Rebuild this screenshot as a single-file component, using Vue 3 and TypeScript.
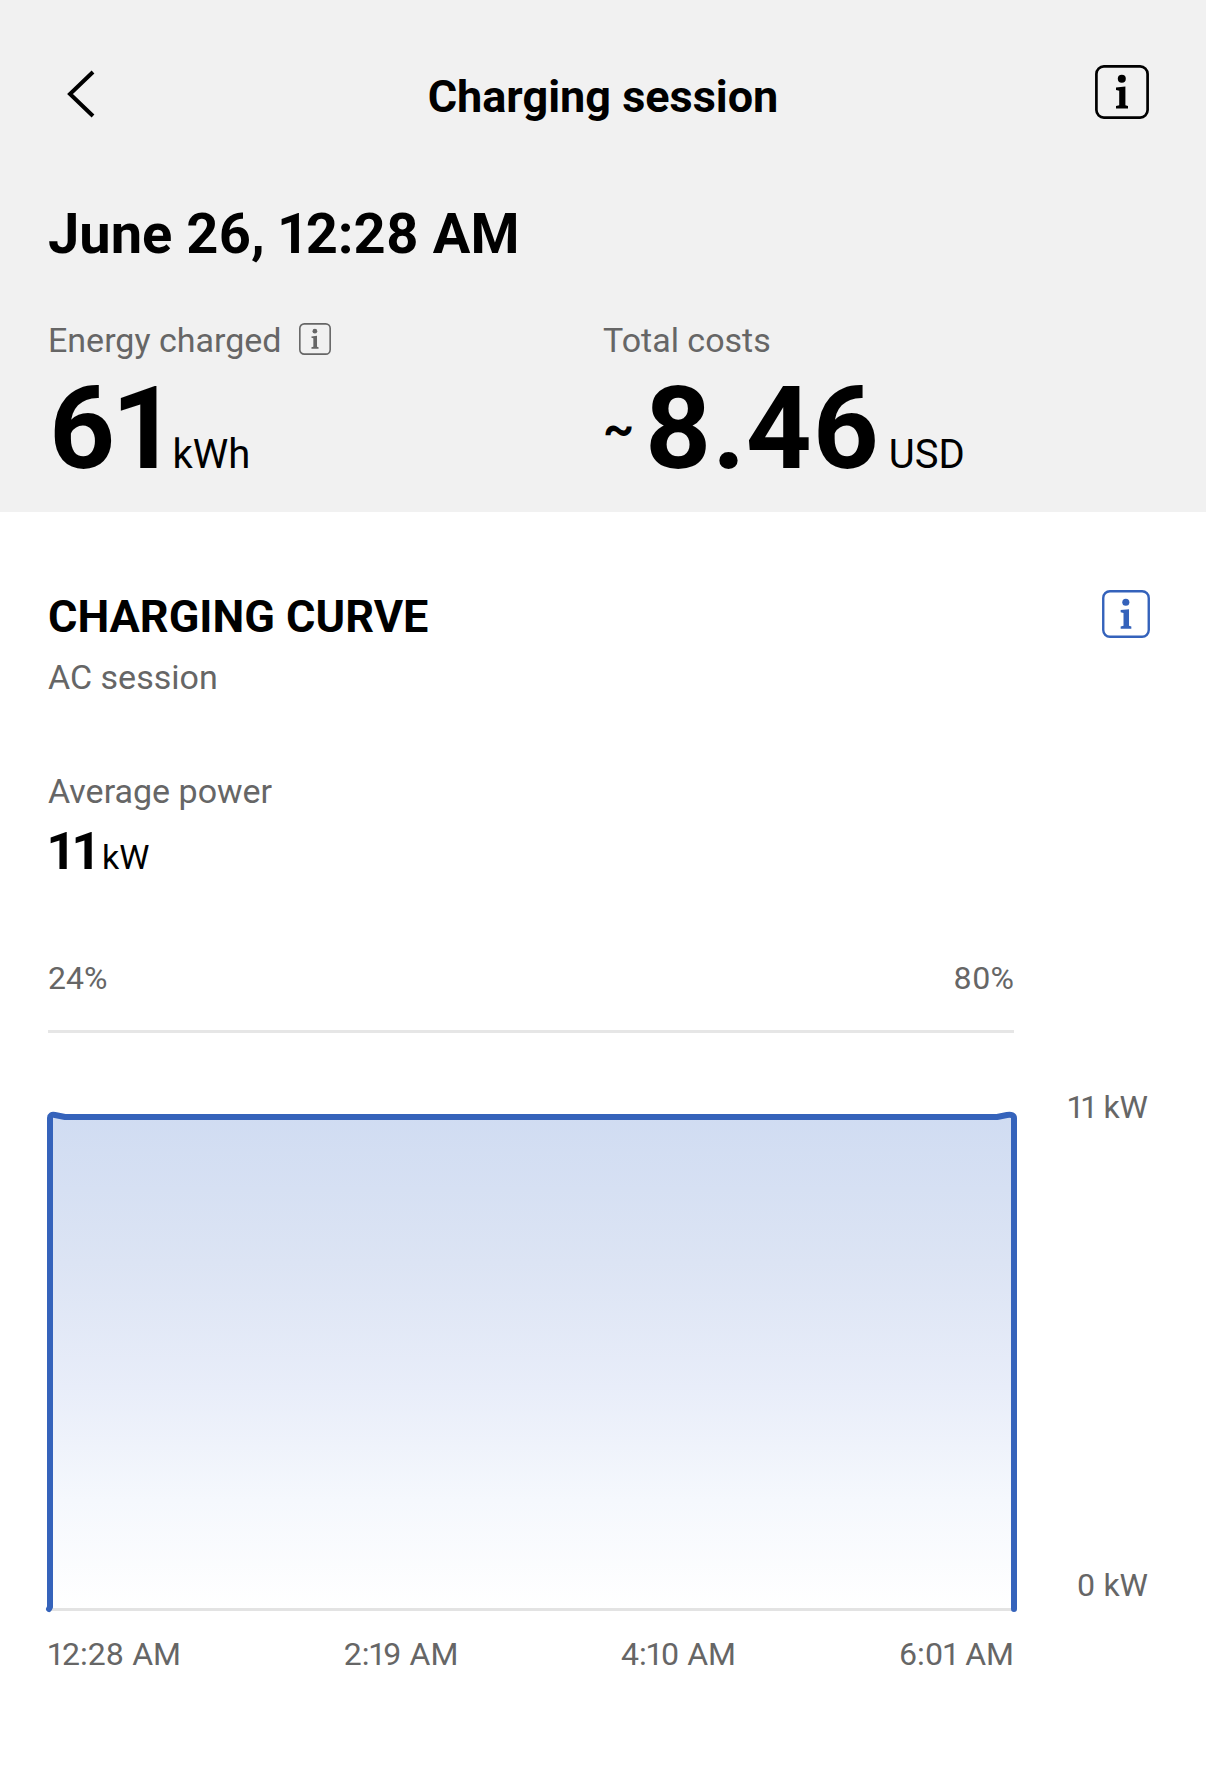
<script setup lang="ts">
import { defineComponent, h } from 'vue'

interface Session {
  startedAt: string
  energy: string
  cost: string
  averagePower: string
  startCharge: string
  endCharge: string
  maxPower: string
  minPower: string
  times: string[]
}

const session: Session = {
  startedAt: 'June 26, 12:28 AM',
  energy: '61',
  cost: '8.46',
  averagePower: '11',
  startCharge: '24%',
  endCharge: '80%',
  maxPower: '11 kW',
  minPower: '0 kW',
  times: ['12:28 AM', '2:19 AM', '4:10 AM', '6:01 AM'],
}

const InfoIcon = defineComponent({
  props: { size: { type: Number, required: true } },
  setup(props) {
    return () =>
      h('svg', { width: props.size, height: props.size, viewBox: '0 0 54 54', 'aria-hidden': 'true' }, [
        h('rect', { x: 1.4, y: 1.4, width: 51.2, height: 51.2, rx: 7.5, fill: 'none', stroke: 'currentColor', 'stroke-width': 2.7 }),
        h('circle', { cx: 26.8, cy: 13.8, r: 4, fill: 'currentColor' }),
        h('path', { d: 'M21 22.6 30.4 21.6V40.2L33 41V43.6H21V41L24.2 40.2V25.8L21 25Z', fill: 'currentColor' }),
      ])
  },
})
</script>

<template>
  <div class="page">
    <header class="summary">
      <div class="topbar">
        <button class="icon-button" type="button" aria-label="Back">
          <svg width="40" height="56" viewBox="0 0 40 56" fill="none" stroke="currentColor" stroke-width="4" aria-hidden="true">
            <path d="M29 8 6 30 29 52" />
          </svg>
        </button>
        <h1 class="title">Charging session</h1>
        <button class="icon-button" type="button" aria-label="Information">
          <InfoIcon :size="54" />
        </button>
      </div>
      <p class="date">{{ session.startedAt }}</p>
      <div class="stats">
        <div class="stat">
          <div class="label">
            Energy charged
            <button class="inline-button" type="button" aria-label="About energy charged">
              <InfoIcon :size="32" />
            </button>
          </div>
          <div class="value tight">
            <span class="number">{{ session.energy }}</span>
            <span class="unit">kWh</span>
          </div>
        </div>
        <div class="stat">
          <div class="label">Total costs</div>
          <div class="value">
            <span class="approx">~</span>
            <span class="number">{{ session.cost }}</span>
            <span class="unit">USD</span>
          </div>
        </div>
      </div>
    </header>

    <main class="curve">
      <div class="heading">
        <div>
          <h2 class="section-title">CHARGING CURVE</h2>
          <p class="label">AC session</p>
        </div>
        <button class="inline-button accent" type="button" aria-label="About the charging curve">
          <InfoIcon :size="48" />
        </button>
      </div>

      <div class="power">
        <div class="label">Average power</div>
        <div class="power-value">
          <span class="power-number">{{ session.averagePower }}</span>
          <span class="power-unit">kW</span>
        </div>
      </div>

      <div class="chart">
        <div class="charge-range">
          <span>{{ session.startCharge }}</span>
          <span>{{ session.endCharge }}</span>
        </div>
        <div class="plot">
          <svg class="plot-area" viewBox="0 0 966 501" preserveAspectRatio="none" role="img" aria-label="Charging power over time">
            <defs>
              <linearGradient id="power-fill" x1="0" y1="0" x2="0" y2="1">
                <stop offset="0" stop-color="#d0dcf2" />
                <stop offset="0.3" stop-color="#dce4f4" />
                <stop offset="0.55" stop-color="#e8edf9" />
                <stop offset="0.78" stop-color="#f5f8fd" />
                <stop offset="1" stop-color="#ffffff" />
              </linearGradient>
            </defs>
            <path d="M2 498V6Q2 3 6 4L17 6H950L960 4Q966 3 966 7V498Z" fill="url(#power-fill)" />
            <path class="baseline" d="M0 498.500H966" />
            <path class="line" d="M1 498 2 496V7Q2 3 7 4L17 6H949L959 4Q966 3 966 7V498" />
          </svg>
        </div>
        <div class="axis">
          <span>{{ session.maxPower }}</span>
          <span>{{ session.minPower }}</span>
        </div>
        <div class="times">
          <span v-for="time in session.times" :key="time">{{ time }}</span>
        </div>
      </div>
    </main>
  </div>
</template>

<style>
body {
  background: #fff;
}
</style>

<style scoped>
.page {
  min-height: 100vh;
  background: #fff;
  color: #000;
  font-family: Roboto, 'Liberation Sans', sans-serif;
  font-variant-numeric: proportional-nums;
}

h1,
h2,
p {
  margin: 0;
}

button {
  display: flex;
  padding: 0;
  border: 0;
  background: none;
  color: inherit;
  cursor: pointer;
}

svg {
  display: block;
  flex: none;
}

.summary {
  padding: 64px 48px 23px;
  background: #f1f1f1;
}

.topbar {
  display: flex;
  align-items: flex-start;
  justify-content: space-between;
}

.icon-button {
  width: 72px;
  height: 56px;
  align-items: center;
  justify-content: center;
}

.title {
  font-size: 45px;
  font-weight: 700;
  line-height: 66px;
}

.date {
  margin-top: 70px;
  font-size: 56px;
  font-weight: 700;
  line-height: 68px;
}

.stats {
  display: grid;
  grid-template-columns: 1fr 1fr;
  margin-top: 50px;
}

.label {
  display: flex;
  align-items: center;
  gap: 18px;
  color: #666;
  font-size: 34px;
  line-height: 44px;
}

.label .inline-button {
  padding-bottom: 2px;
}

.value {
  display: flex;
  align-items: baseline;
  gap: 10px;
  margin-top: 7px;
}

.value.tight {
  gap: 2px;
}

.number {
  font-size: 115px;
  font-weight: 700;
  line-height: 120px;
}

.approx {
  align-self: center;
  font-size: 48px;
  font-weight: 700;
  line-height: 60px;
}

.unit {
  font-size: 40px;
  line-height: 48px;
}

.curve {
  padding: 77px 48px 64px;
}

.heading {
  display: flex;
  align-items: flex-start;
  justify-content: space-between;
}

.accent {
  margin-top: 1px;
  margin-right: 8px;
  color: #3462bb;
}

.section-title {
  margin-bottom: 10px;
  font-size: 45px;
  font-weight: 700;
  line-height: 56px;
}

.power {
  margin-top: 70px;
}

.power-value {
  display: flex;
  align-items: baseline;
  gap: 4px;
  margin-top: 9px;
}

.power-number {
  font-size: 52px;
  font-weight: 700;
  line-height: 60px;
}

.power-unit {
  font-size: 34px;
  line-height: 44px;
}

.chart {
  display: grid;
  grid-template-columns: minmax(0, 1fr) 144px;
  margin-top: 74px;
  color: #666;
  font-size: 32px;
  line-height: 44px;
}

.charge-range {
  display: flex;
  justify-content: space-between;
  margin-bottom: 52px;
  padding-bottom: 30px;
  border-bottom: 3px solid #e6e6e6;
}

.plot {
  grid-column: 1;
  padding-top: 26px;
}

.plot-area {
  width: 100%;
  height: 501px;
  overflow: visible;
}

.baseline {
  fill: none;
  stroke: #e3e3e3;
  stroke-width: 3;
}

.line {
  fill: none;
  stroke: #3563bb;
  stroke-width: 6;
  stroke-linecap: round;
  stroke-linejoin: round;
  vector-effect: non-scaling-stroke;
}

.axis {
  display: flex;
  flex-direction: column;
  align-items: flex-end;
  justify-content: space-between;
  padding: 0 10px 5px 0;
}

.times {
  display: flex;
  grid-column: 1;
  justify-content: space-between;
  margin-top: 20px;
}
</style>
